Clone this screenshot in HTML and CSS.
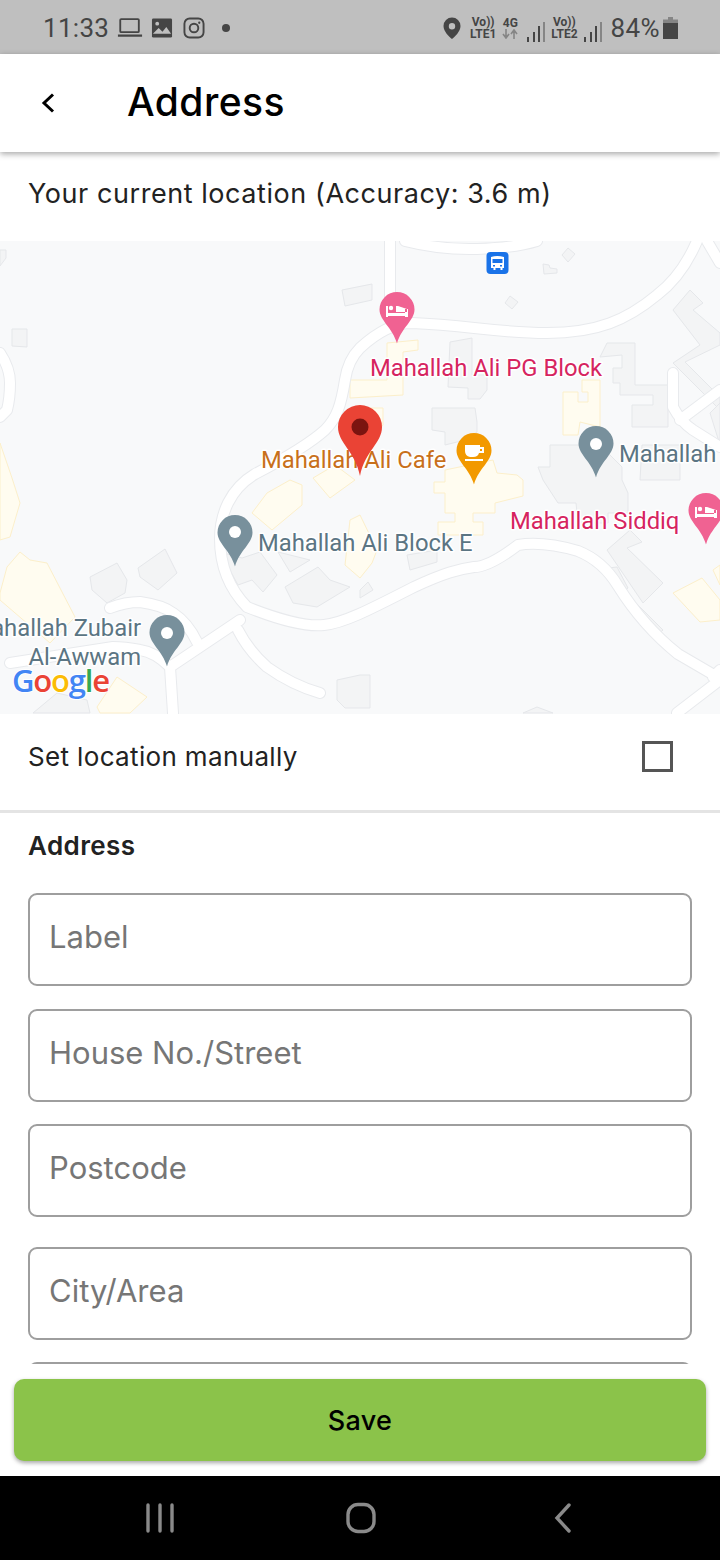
FILE: index.html
```html
<!DOCTYPE html>
<html lang="en">
<head>
<meta charset="utf-8">
<title>Address</title>
<link rel="stylesheet" href="styles.css">
</head>
<body>
<div class="phone">
  <header class="status">
    <div class="status-left">
      <span class="clock">11:33</span>
      <svg class="si si-laptop" width="26" height="24" viewBox="0 0 28 24"><rect x="3.500" y="2.500" width="20" height="14" rx="1" fill="none" stroke="#454545" stroke-width="2"/><rect x="1" y="19" width="26" height="2.400" fill="#454545"/></svg>
      <svg class="si si-image" width="22" height="22" viewBox="0 0 23 22"><rect x="1" y="1" width="21" height="20" rx="1.500" fill="#454545"/><circle cx="6.500" cy="6.500" r="2" fill="#bfbfbf"/><path d="M2 17l6-6 4 4 4-5 5 7z" fill="#bfbfbf"/></svg>
      <svg class="si" width="22" height="22" viewBox="0 0 23 23"><rect x="1.500" y="1.500" width="20" height="20" rx="5.500" fill="none" stroke="#454545" stroke-width="2"/><circle cx="11.500" cy="11.500" r="4.500" fill="none" stroke="#454545" stroke-width="2"/><circle cx="17" cy="6" r="1.200" fill="#454545"/></svg>
      <span class="dot"></span>
    </div>
    <div class="status-right">
      <svg class="pin-s" width="20" height="24" viewBox="0 0 20 24"><path fill-rule="evenodd" d="M10 1.500a8.500 8.500 0 0 1 8.500 8.500c0 5.500-5.500 10.500-8.500 13-3-2.500-8.500-7.500-8.500-13A8.500 8.500 0 0 1 10 1.500zm0 5.500a3.200 3.200 0 1 0 0 6.400 3.200 3.200 0 0 0 0-6.400z" fill="#454545"/></svg>
      <span class="net net-a"><b>Vo))</b><b>LTE1</b></span>
      <span class="net net-b"><b>4G</b><svg width="16" height="10" viewBox="0 0 16 10"><path d="M4 0v8M1 5l3 4 3-4M12 10V2M9 5l3-4 3 4" fill="none" stroke="#858585" stroke-width="1.600"/></svg></span>
      <svg class="bars" width="20" height="22" viewBox="0 0 20 22"><rect x="1" y="16" width="2" height="5" fill="#454545"/><rect x="7" y="11" width="2" height="10" fill="#454545"/><rect x="12" y="5" width="2" height="16" fill="#454545"/><rect x="17" y="1" width="2" height="20" fill="#858585"/></svg>
      <span class="net net-c"><b>Vo))</b><b>LTE2</b></span>
      <svg class="bars" width="20" height="22" viewBox="0 0 20 22"><rect x="1" y="16" width="2" height="5" fill="#454545"/><rect x="7" y="11" width="2" height="10" fill="#454545"/><rect x="12" y="5" width="2" height="16" fill="#454545"/><rect x="17" y="1" width="2" height="20" fill="#858585"/></svg>
      <span class="pct">84%</span>
      <svg class="batt" width="15" height="22" viewBox="0 0 15 22"><path d="M5 0h5v2.500h5V6H0V2.500h5z" fill="#858585"/><rect y="6" width="15" height="16" fill="#454545"/></svg>
    </div>
  </header>

  <div class="appbar">
    <svg class="back" width="16" height="24" viewBox="0 0 16 24"><path d="M13 3.500L4 12l9 8.500" fill="none" stroke="#000" stroke-width="3"/></svg>
    <h1 class="title">Address</h1>
  </div>

  <main class="content">
    <p class="accuracy">Your current location (Accuracy: 3.6 m)</p>

    <div class="map">
      <svg class="map-svg" width="720" height="473" viewBox="0 241 720 473">
        <defs>
          <g id="roads">
            <path d="M390 241v60M405 241q35 9 72 8t60-8"/>
            <path d="M697 241q-15 35-40 54c-30 25-60 38-110 38s-80-8-135-10q-25 0-52 25q-12 12-15 32c-4 25-8 38-20 50q-20 18-70 44c-25 15-35 40-35 65q0 40 27 68c30 12 60 20 77 18 20-2 45-15 90-38 30-14 45-18 60-20q15 0 44-22 25-4 60 6 25 10 40 35 25 40 60 68l55 32"/>
            <path d="M707 241l13 22M673 373v34q8 15 20 23l27 17M680 420l40-30M713 677l7-7M720 680l-43 33"/>
            <path d="M240 620l-70 47 3 46M170 667q-15-15-30-17-15-3-27-3l-103 16M110 608q15-6 30-6 22 3 33 11 15 10 24 29M238 630q10 20 29 37 25 18 53 26"/>
            <path d="M0 353q10 15 10 30t-3 27l-7 7"/>
          </g>
        </defs>
        <g class="bld">
          <path d="M342 290l30-6 0 16-27 6zM12 329l15 0 0 18-15-1zM510 296l8 6-6 7-7-6zM568 248l7 6-7 8-6-7zM543 264l6 1 1 3 7 1 0 4-13 1z"/>
          <path d="M450 342l22-4v37h15v15l-7 9h-12v-11l-20-1z"/>
          <path d="M600 357l7-14h28v42h33v42h-36v-22h21v-10h-33v-12h-7v-15h9v-13z"/>
          <path d="M432 408h43l2 14v10l-12 8-20 5v-13l-13-2z"/>
          <path d="M538 467h12v-22h50l22 22v13l6 13v20h-20v10h-30l-2-20h-18l-15-23z"/>
          <path d="M642 445h38v35h-40z"/>
          <path d="M673 310l17-20 13 13-10 7 27 23v12l-35 17 35 35v13l-47-47 27-18-27-35z"/>
          <path d="M720 403l-10 10 10 32z"/>
          <path d="M90 577l27-14 10 17-2 13-18 10-15-13zM138 568l27-19 12 24-19 17-18-13z"/>
          <path d="M220 552l22 6 18-6 17 23-14 17-11-12-14 5z"/>
          <path d="M278 552l32 8-20 12zM285 587l33-20 12 13 20 7-33 20-24-4z"/>
          <path d="M337 680l23-5h10v33h-25l-8-8z"/>
          <path d="M33 713l24-20 30 7 3 13zM523 713l14-6 16 6z"/>
          <path d="M607 550l23-20 12 12-15 6 36 35-20 20zM608 568l9-1 11 21-6 5zM627 605l6-5 30 30-8 7z"/>
          <path d="M407 555l30-5v12l-27 8zM360 590l8-8 5 8-13 8zM0 250l6 0 0 8-6 8z"/>
        </g>
        <g class="yel">
          <path d="M387 343l31-3v10l-15 2v43l-53 3v-18h37z"/>
          <path d="M445 470l48-10 4 13 20 2 6 5v16l-28 7v10h-22v9h10v13h-45v-13h17v-9h-10v-20h-11v-11h11z"/>
          <path d="M563 392h15v10h10v-10h-6v-12h18v47l-20-5-2 13h-15z"/>
          <path d="M673 593l29-15 18 22v20l-20 2z"/>
          <path d="M713 570l7-5v20zM0 593l7-26 13-15 10 8 17 3 28 54-25 26-50-43zM0 443l12 35 8 25-10 34-10 3z"/>
          <path d="M252 513l15-20 23-13 12 5v20l-30 25zM313 478l22-13 20 15-25 18zM350 520l10-5 17 35-5 13-12 15-15-13zM97 707l20-30 30 20-17 16h-30z"/>
          <path d="M370 408h13v17l-13 15z"/>
        </g>
        <use class="road-case" href="#roads"/>
        <use class="road-fill" href="#roads"/>
        <g class="pois">
          <text class="t-pink" x="370" y="376">Mahallah Ali PG Block</text>
          <text class="t-orange" x="261" y="468">Mahallah Ali Cafe</text>
          <text class="t-slate" x="619" y="462">Mahallah</text>
          <text class="t-slate" x="258" y="551">Mahallah Ali Block E</text>
          <text class="t-pink" x="510" y="529">Mahallah Siddiq</text>
          <text class="t-slate t-end" x="141" y="636">Mahallah Zubair</text>
          <text class="t-slate t-end" x="141" y="665">Al-Awwam</text>
        </g>
        <path class="p-pink" d="M397 292a17.500 17.500 0 0 1 17.500 17.500c0 11-13 18-17.500 34-4.500-16-17.500-23-17.500-34A17.500 17.500 0 0 1 397 292z"/>
        <path d="M386 306h2v11h-2zM388 312h19v-3l-9-3h-2v6zM405 309h3v8h-3zM388 313h17v3h-17z" fill="#fff"/><circle cx="391" cy="308" r="2.200" fill="#fff"/>
        <path class="p-pink" d="M706 493a17.500 17.500 0 0 1 17.500 17.500c0 11-13 18-17.500 34-4.500-16-17.500-23-17.500-34A17.500 17.500 0 0 1 706 493z"/>
        <path d="M695 507h2v11h-2zM697 513h19v-3l-9-3h-2v6zM714 510h3v8h-3zM697 514h17v3h-17z" fill="#fff"/><circle cx="700" cy="509" r="2.200" fill="#fff"/>
        <path class="p-grey" d="M596 426a17.500 17.500 0 0 1 17.500 17.500c0 11-13 18-17.500 34-4.500-16-17.500-23-17.500-34A17.500 17.500 0 0 1 596 426z"/><circle cx="596" cy="444" r="6" fill="#fff"/>
        <path class="p-grey" d="M235 515a17.500 17.500 0 0 1 17.500 17.500c0 11-13 18-17.500 34-4.500-16-17.500-23-17.500-34A17.500 17.500 0 0 1 235 515z"/><circle cx="235" cy="532" r="6" fill="#fff"/>
        <path class="p-grey" d="M167 615a17.500 17.500 0 0 1 17.500 17.500c0 11-13 18-17.500 34-4.500-16-17.500-23-17.500-34A17.500 17.500 0 0 1 167 615z"/><circle cx="167" cy="633" r="6" fill="#fff"/>
        <path class="p-orange" d="M474 433a17.500 17.500 0 0 1 17.500 17.500c0 11-13 18-17.500 34-4.500-16-17.500-23-17.500-34A17.500 17.500 0 0 1 474 433z"/>
        <path d="M465 445h15v2h4v6h-5q-1 4-6 4h-3q-5-1-5-6zM480 449v2h2v-2zM465 459h18v2h-18z" fill="#fff" fill-rule="evenodd"/>
        <path class="p-red" d="M360 405a22 22 0 0 1 22 22c0 16-17 24-22 49-5-25-22-33-22-49a22 22 0 0 1 22-22z"/><circle cx="360" cy="427" r="8.500" fill="#7b1410"/>
        <rect x="486.500" y="252" width="22" height="22" rx="4" fill="#1a73e8"/>
        <path d="M491 257q6-2 13 0v11h-1.500v2h-2v-2h-5v2h-2v-2H491zM492.500 259v4h10v-4zM493 265v1.500h2V265zM500 265v1.500h2V265z" fill="#fff" fill-rule="evenodd"/>
        <text class="google" x="12" y="692"><tspan class="g-b">G</tspan><tspan class="g-r">o</tspan><tspan class="g-y">o</tspan><tspan class="g-b">g</tspan><tspan class="g-g">l</tspan><tspan class="g-r">e</tspan></text>
      </svg>
    </div>

    <div class="manual">
      <span class="manual-label">Set location manually</span>
      <span class="checkbox"></span>
    </div>

    <section class="form">
      <h2 class="form-title">Address</h2>
      <div class="field f1">Label</div>
      <div class="field f2">House No./Street</div>
      <div class="field f3">Postcode</div>
      <div class="field f4">City/Area</div>
      <div class="field f5"></div>
    </section>
  </main>

  <div class="actions">
    <button class="save" type="button">Save</button>
  </div>

  <nav class="navbar">
    <svg width="30" height="30" viewBox="0 0 30 30"><path d="M3 2v26M15 2v26M27 2v26" stroke="#8a8a8a" stroke-width="3.400" stroke-linecap="round" fill="none"/></svg>
    <svg class="nav-home" width="30" height="32" viewBox="0 0 30 32"><rect x="2" y="2.500" width="26" height="27" rx="10" fill="none" stroke="#8a8a8a" stroke-width="3.400"/></svg>
    <svg width="20" height="30" viewBox="0 0 20 30"><path d="M16 2L4 15l12 13" stroke="#8a8a8a" stroke-width="3.400" stroke-linecap="round" fill="none"/></svg>
  </nav>
</div>
</body>
</html>
```
FILE: styles.css
```css
* { box-sizing: border-box; }
html, body { margin: 0; padding: 0; background: #fff; }
.phone {
  width: 720px;
  height: 1560px;
  display: flex;
  flex-direction: column;
  overflow: hidden;
  font-family: "Inter", "Open Sans", sans-serif;
}

/* status bar */
.status {
  height: 54px;
  flex: none;
  background: #bfbfbf;
  display: flex;
  justify-content: space-between;
  align-items: center;
  padding: 1px 42px 0 43px;
  color: #454545;
  font-family: Roboto, sans-serif;
}
.status-left, .status-right { display: flex; align-items: center; }
.clock { font-size: 26px; margin-right: 8px; letter-spacing: .3px; }
.si-laptop { margin-right: 8px; }
.si-image { margin-right: 10px; }
.dot { width: 8px; height: 8px; border-radius: 50%; background: #454545; margin-left: 17px; }
.pin-s { margin-right: 8px; }
.net { display: flex; flex-direction: column; align-items: center; font-size: 12px; line-height: 12px; }
.net b { font-weight: 700; }
.net-a { margin-right: 6px; }
.net-b { margin-right: 8px; }
.net-c { margin: 0 5px 0 5px; }
.bars { margin-top: 8px; }
.pct { font-size: 26px; margin-left: 8px; margin-right: 3px; letter-spacing: .4px; }

/* app bar */
.appbar {
  height: 98px;
  flex: none;
  display: flex;
  align-items: center;
  background: #fff;
  box-shadow: 0 2px 6px rgba(0, 0, 0, .35);
  position: relative;
  z-index: 2;
  padding: 0 0 0 40px;
}
.back { margin-right: 71px; }
.title { margin: 0 0 3px; font-size: 39px; font-weight: 500; letter-spacing: .45px; color: #000; }

/* content */
.content { flex: 1; min-height: 0; overflow: hidden; }
.accuracy {
  margin: 0;
  height: 89px;
  padding: 24px 0 0 28px;
  font-size: 27px;
  line-height: 36px;
  letter-spacing: .56px;
  color: #222;
}
.map { height: 473px; background: #f8f9fa; }
.map-svg { display: block; }
.bld path { fill: #f3f4f5; stroke: #e5e7ea; stroke-width: 1; }
.yel path { fill: #fffcf0; stroke: #fcefca; stroke-width: 1; }
.road-case, .road-fill {
  fill: none;
  stroke-linecap: round;
  stroke-linejoin: round;
}
.road-case { stroke: #e8eaed; stroke-width: 12; }
.road-fill { stroke: #fff; stroke-width: 10; }
.pois text {
  font-family: Roboto, sans-serif;
  font-size: 23.800px;
  stroke: #fff;
  stroke-width: 3px;
  paint-order: stroke;
  stroke-linejoin: round;
}
.pois .t-end { text-anchor: end; }
.t-pink { fill: #d6245f; }
.t-orange { fill: #c8701b; }
.t-slate { fill: #5b7583; }
.p-pink { fill: #f06292; }
.p-grey { fill: #78909c; }
.p-orange { fill: #f29900; }
.p-red { fill: #ea4335; }
.google {
  font-family: "Open Sans", sans-serif;
  font-size: 31px;
  font-weight: 600;
  stroke: #fff;
  stroke-width: 2px;
  paint-order: stroke;
  letter-spacing: -1.200px;
}
.g-b { fill: #4285f4; }
.g-r { fill: #ea4335; }
.g-y { fill: #fbbc05; }
.g-g { fill: #34a853; }

.manual {
  height: 99px;
  display: flex;
  justify-content: space-between;
  align-items: center;
  padding: 0 47px 12px 28px;
  border-bottom: 3px solid #e4e4e4;
}
.manual-label { font-size: 26px; letter-spacing: .35px; color: #222; }
.checkbox { width: 31px; height: 31px; border: 3px solid #555; }

.form { padding: 15px 28px 0; }
.form-title { margin: 0 0 29px; font-size: 26px; line-height: 36px; font-weight: 600; letter-spacing: .4px; color: #222; }
.field {
  height: 93px;
  border: 2px solid #9e9e9e;
  border-radius: 9px;
  padding: 0 0 6px 19px;
  display: flex;
  align-items: center;
  font-size: 31px;
  color: #767676;
}
.f1 { margin-bottom: 23px; }
.f2 { margin-bottom: 22px; }
.f3 { margin-bottom: 30px; }
.f4 { margin-bottom: 22px; }

/* actions */
.actions {
  height: 112px;
  flex: none;
  background: #fff;
  padding: 15px 14px 0;
  position: relative;
  z-index: 1;
}
.save {
  width: 100%;
  height: 82px;
  border: 0;
  border-radius: 10px;
  background: #8bc34a;
  box-shadow: 0 2px 4px rgba(0, 0, 0, .35);
  font-family: "Inter", sans-serif;
  font-size: 27px;
  font-weight: 500;
  letter-spacing: .3px;
  color: #000;
}

/* nav */
.navbar {
  height: 84px;
  flex: none;
  background: #000;
  display: flex;
  align-items: center;
  justify-content: space-between;
  padding: 0 147px 0 145px;
}
.nav-home { margin-right: 6px; }
```
